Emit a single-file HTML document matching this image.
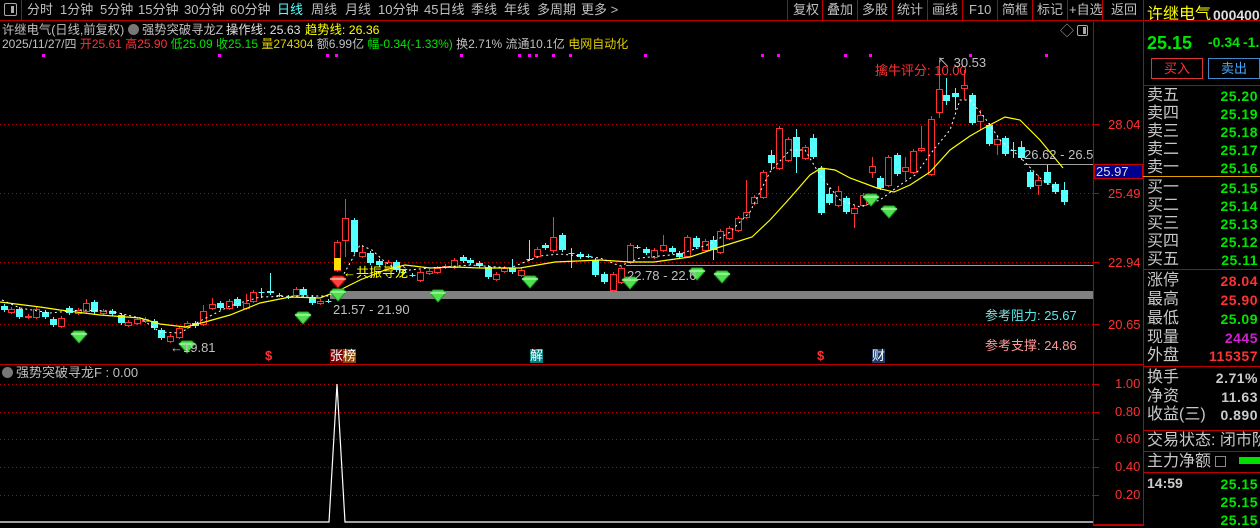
<!DOCTYPE html>
<html><head><meta charset="utf-8"><style>
*{margin:0;padding:0;box-sizing:border-box}
body{width:1260px;height:526px;background:#000;overflow:hidden;position:relative;font-family:"Liberation Sans","Noto Sans CJK SC",sans-serif;color:#c0c0c0}
.t{position:absolute;white-space:nowrap;font-size:13px;line-height:14px}
.r{color:#ff3232}.g{color:#00e600}.y{color:#ffff00}.w{color:#e0e0e0}.cy{color:#54ffff}
.hl{position:absolute;height:1px;background:#c00000}
.vl{position:absolute;width:1px;background:#c00000}
.rt{position:absolute;right:2px;font-size:14px;font-weight:bold;letter-spacing:0.5px;white-space:nowrap}
.lab{position:absolute;left:1147px;font-size:16px;color:#c8c8c8;line-height:17px;white-space:nowrap}
</style></head><body>
<svg id="s" width="1260" height="526" style="position:absolute;left:0;top:0"></svg>

<div style="position:absolute;left:4px;top:3px;width:13px;height:13px;border:1px solid #aaa;border-radius:2px"><div style="position:absolute;right:2px;top:2px;width:3px;height:7px;background:#aaa"></div></div>
<div class="t" style="left:27px;top:3px">分时</div>
<div class="t" style="left:60px;top:3px">1分钟</div>
<div class="t" style="left:100px;top:3px">5分钟</div>
<div class="t" style="left:138px;top:3px">15分钟</div>
<div class="t" style="left:184px;top:3px">30分钟</div>
<div class="t" style="left:230px;top:3px">60分钟</div>
<div class="t cy" style="left:277px;top:3px">日线</div>
<div class="t" style="left:311px;top:3px">周线</div>
<div class="t" style="left:345px;top:3px">月线</div>
<div class="t" style="left:378px;top:3px">10分钟</div>
<div class="t" style="left:424px;top:3px">45日线</div>
<div class="t" style="left:471px;top:3px">季线</div>
<div class="t" style="left:504px;top:3px">年线</div>
<div class="t" style="left:537px;top:3px">多周期</div>
<div class="t" style="left:581px;top:3px">更多 &gt;</div>

<div class="t" style="left:793px;top:3px">复权</div>
<div class="t" style="left:827px;top:3px">叠加</div>
<div class="t" style="left:862px;top:3px">多股</div>
<div class="t" style="left:897px;top:3px">统计</div>
<div class="t" style="left:932px;top:3px">画线</div>
<div class="t" style="left:969px;top:3px">F10</div>
<div class="t" style="left:1002px;top:3px">简框</div>
<div class="t" style="left:1037px;top:3px">标记</div>
<div class="t" style="left:1069px;top:3px">+自选</div>
<div class="t" style="left:1111px;top:3px">返回</div>

<div class="t" style="left:2px;top:23px;font-size:12.3px">许继电气(日线,前复权)</div>
<div style="position:absolute;left:128px;top:24px;width:11px;height:11px;border-radius:50%;background:#777"></div>
<div class="t" style="left:142px;top:23px;font-size:12.3px">强势突破寻龙Z</div>
<div class="t w" style="left:226px;top:23px;font-size:12.3px">操作线: 25.63</div>
<div class="t y" style="left:305px;top:23px;font-size:12.3px">趋势线: 26.36</div>
<div class="t" style="left:2px;top:37px;font-size:12px">2025/11/27/四 <span class="r">开25.61</span> <span class="r">高25.90</span> <span class="g">低25.09</span> <span class="g">收25.15</span> <span style="color:#e0d000">量274304</span> 额6.99亿 <span class="g">幅-0.34(-1.33%)</span> 换2.71% 流通10.1亿 <span style="color:#e0d000">电网自动化</span></div>

<div class="t" style="left:1060px;top:24px;color:#999;font-size:14px">◇</div>
<div style="position:absolute;left:1077px;top:25px;width:11px;height:11px;border:1px solid #aaa;border-radius:2px"><div style="position:absolute;right:1px;top:1px;width:3px;height:7px;background:#aaa"></div></div>

<div class="t r" style="left:875px;top:64px">擒牛评分: 10.00</div>
<div class="t" style="left:937px;top:56px">↖ 30.53</div>
<div class="t" style="left:1024px;top:148px">26.62 - 26.5</div>
<div class="t" style="left:627px;top:269px">22.78 - 22.6</div>
<div class="t" style="left:333px;top:303px">21.57 - 21.90</div>
<div class="t" style="left:170px;top:341px">←19.81</div>
<div class="t y" style="left:343px;top:266px">←共振寻龙</div>
<div class="t" style="left:985px;top:309px;color:#5ee"><span style="color:#8dd">参考</span>阻力: 25.67</div>
<div class="t" style="left:985px;top:339px;color:#f99">参考支撑: 24.86</div>
<div class="t r" style="left:265px;top:349px;font-weight:bold">$</div>
<div class="t" style="left:330px;top:349px;background:#800000;color:#fff">张</div>
<div class="t" style="left:343px;top:349px;background:#8b4500;color:#fff">榜</div>
<div class="t" style="left:530px;top:349px;background:#008080;color:#fff">解</div>
<div class="t r" style="left:817px;top:349px;font-weight:bold">$</div>
<div class="t" style="left:872px;top:349px;background:#1a3a6a;color:#fff">财</div>

<div style="position:absolute;left:2px;top:367px;width:11px;height:11px;border-radius:50%;background:#777"></div>
<div class="t" style="left:16px;top:366px">强势突破寻龙F : 0.00</div>

<div class="t r" style="left:1108px;top:118px">28.04</div>
<div class="t r" style="left:1108px;top:187px">25.49</div>
<div class="t r" style="left:1108px;top:256px">22.94</div>
<div class="t r" style="left:1108px;top:318px">20.65</div>
<div class="t" style="left:1094px;top:164px;width:49px;height:15px;background:#000090;color:#ddd;padding-left:1px;border:1px solid #c00">25.97</div>
<div class="t r" style="left:1115px;top:377px">1.00</div>
<div class="t r" style="left:1115px;top:405px">0.80</div>
<div class="t r" style="left:1115px;top:432px">0.60</div>
<div class="t r" style="left:1115px;top:460px">0.40</div>
<div class="t r" style="left:1115px;top:488px">0.20</div>

<div style="position:absolute;left:1144px;top:0;width:116px;height:526px;overflow:hidden">
<div class="t y" style="left:3px;top:6px;font-size:16px;line-height:18px">许继电气</div>
<div class="t" style="left:69px;top:8px;font-size:14px;font-weight:bold;color:#ddd">000400</div>
<div class="t g" style="left:3px;top:33px;font-size:18px;line-height:20px;font-weight:bold">25.15</div>
<div class="t g" style="left:64px;top:35px;font-size:14px;font-weight:bold">-0.34</div>
<div class="t g" style="left:99px;top:35px;font-size:14px;font-weight:bold">-1.</div>
<div style="position:absolute;left:7px;top:58px;width:52px;height:21px;border:1px solid #d33;color:#f33;font-size:13px;text-align:center;line-height:19px">买入</div>
<div style="position:absolute;left:64px;top:58px;width:52px;height:21px;border:1px solid #48c;color:#4af;font-size:13px;text-align:center;line-height:19px">卖出</div>
<div class="t" style="left:3px;top:432px;font-size:16px;line-height:17px;color:#c8c8c8">交易状态: 闭市阶</div>
</div>

<div class="lab" style="top:87px">卖五</div><div class="rt g" style="top:88px">25.20</div>
<div class="lab" style="top:105px">卖四</div><div class="rt g" style="top:106px">25.19</div>
<div class="lab" style="top:123px">卖三</div><div class="rt g" style="top:124px">25.18</div>
<div class="lab" style="top:141px">卖二</div><div class="rt g" style="top:142px">25.17</div>
<div class="lab" style="top:159px">卖一</div><div class="rt g" style="top:160px">25.16</div>
<div class="lab" style="top:179px">买一</div><div class="rt g" style="top:180px">25.15</div>
<div class="lab" style="top:197px">买二</div><div class="rt g" style="top:198px">25.14</div>
<div class="lab" style="top:215px">买三</div><div class="rt g" style="top:216px">25.13</div>
<div class="lab" style="top:233px">买四</div><div class="rt g" style="top:234px">25.12</div>
<div class="lab" style="top:251px">买五</div><div class="rt g" style="top:252px">25.11</div>
<div class="lab" style="top:272px">涨停</div><div class="rt r" style="top:273px">28.04</div>
<div class="lab" style="top:291px">最高</div><div class="rt r" style="top:292px">25.90</div>
<div class="lab" style="top:310px">最低</div><div class="rt g" style="top:311px">25.09</div>
<div class="lab" style="top:329px">现量</div><div class="rt" style="top:330px;color:#d020d0">2445</div>
<div class="lab" style="top:347px">外盘</div><div class="rt r" style="top:348px">115357</div>
<div class="lab" style="top:369px">换手</div><div class="rt" style="top:370px;color:#ccc">2.71%</div>
<div class="lab" style="top:388px">净资</div><div class="rt" style="top:389px;color:#ccc">11.63</div>
<div class="lab" style="top:406px">收益(三)</div><div class="rt" style="top:407px;color:#ccc">0.890</div>
<div class="lab" style="top:453px">主力净额</div>
<div style="position:absolute;left:1215px;top:456px;width:11px;height:11px;border:1px solid #888"></div>
<div style="position:absolute;left:1239px;top:457px;width:21px;height:7px;background:#00e000"></div>
<div class="t" style="left:1147px;top:476px;font-size:14px;font-weight:bold;color:#ccc">14:59</div>
<div class="rt g" style="top:476px">25.15</div>
<div class="rt g" style="top:494px">25.15</div>
<div class="rt g" style="top:512px">25.15</div>

<div class="hl" style="left:0;top:20px;width:1260px"></div>
<div class="vl" style="left:787px;top:0;height:20px"></div><div class="vl" style="left:822px;top:0;height:20px"></div><div class="vl" style="left:857px;top:0;height:20px"></div><div class="vl" style="left:892px;top:0;height:20px"></div><div class="vl" style="left:927px;top:0;height:20px"></div><div class="vl" style="left:962px;top:0;height:20px"></div><div class="vl" style="left:997px;top:0;height:20px"></div><div class="vl" style="left:1032px;top:0;height:20px"></div><div class="vl" style="left:1067px;top:0;height:20px"></div><div class="vl" style="left:1102px;top:0;height:20px"></div><div class="vl" style="left:21px;top:0;height:20px"></div>
<div class="vl" style="left:1143px;top:0;height:526px"></div>
<div class="vl" style="left:1093px;top:20px;height:506px"></div>
<div class="hl" style="left:0;top:364px;width:1143px"></div>
<div class="hl" style="left:1093px;top:524px;width:50px;height:2px"></div>
<div class="hl" style="left:1143px;top:85px;width:117px"></div>
<div class="hl" style="left:1143px;top:176px;width:117px;background:#e0a000"></div>
<div class="hl" style="left:1143px;top:269px;width:117px"></div>
<div class="hl" style="left:1143px;top:366px;width:117px"></div>
<div class="hl" style="left:1143px;top:430px;width:117px"></div>
<div class="hl" style="left:1143px;top:451px;width:117px"></div>
<div class="hl" style="left:1143px;top:472px;width:117px"></div>

<script>
var s=document.getElementById('s'),h='';
function L(x1,y1,x2,y2,c,ex){h+='<line x1="'+x1+'" y1="'+y1+'" x2="'+x2+'" y2="'+y2+'" stroke="'+c+'" '+(ex||'')+'/>';}
[124,193,262,324].forEach(function(y){L(0,y+.5,1093,y+.5,'#c00000','stroke-dasharray="1,3"');});
[384,412,439,467,495].forEach(function(y){L(0,y+.5,1093,y+.5,'#c00000','stroke-dasharray="1,3"');});
[124,193,262,324].forEach(function(y){L(1093,y+.5,1099,y+.5,'#c00000');});
[384,412,439,467,495].forEach(function(y){L(1093,y+.5,1099,y+.5,'#c00000');});
h+='<rect x="330" y="291" width="763" height="8" fill="#808080"/>';
L(626,265.5,1093,265.5,'#a0a0a0');L(1024,164.5,1093,164.5,'#a0a0a0');
[43,219,327,336,461,519,529,536,553,570,645,762,778,845,870,970,1046].forEach(function(x){h+='<rect x="'+(x-1)+'" y="54" width="3" height="3" fill="#f0f"/>';});
var A=[[10,306,310,'c'],[32,309,312,'r'],[55,309,317,'c'],[80,316,317,'r'],[104,309,317,'r'],[128,312,317,'c'],[152,319,325,'c'],[175,318,326,'r'],[198,308,313,'c'],[222,310,313,'r'],[245,303,311,'r',299],[268,302,312,'c'],[295,311,313,'r'],[320,311,314,'c'],[345,315,323,'c'],[365,322,325,'r'],[390,319,323,'r'],[412,319,321,'r'],[438,321,328,'c'],[460,330,338,'c'],[485,336,341,'r'],[510,328,337,'r'],[533,323,327,'r'],[555,323,326,'c'],[580,311,324,'r',305],[603,304,308,'r',298],[628,303,308,'c'],[652,301,308,'r'],[675,299,306,'c'],[700,303,308,'r',294],[722,292,301,'r'],[745,292,292,'+',288,298],[770,291,293,'c',273],[795,295,295,'+'],[820,297,297,'+'],[843,289,295,'r'],[865,289,295,'c'],[890,297,303,'c'],[912,301,303,'r'],[935,301,301,'+'],[960,242,270,'y'],[985,218,240,'r',199,257],[1008,220,252,'c'],[1033,252,256,'r',245],[1055,253,263,'c'],[1080,261,265,'c'],[1105,262,267,'r'],[1128,262,270,'c'],[1150,272,272,'+'],[1175,275,275,'+'],[1198,272,280,'r'],[1222,271,273,'r'],[1247,268,272,'r'],[1270,266,267,'r'],[1295,260,267,'r'],[1320,257,261,'c'],[1340,260,263,'c'],[1365,263,266,'c'],[1390,267,277,'c'],[1413,274,279,'r'],[1437,268,271,'r'],[1460,268,272,'c',259],[1485,270,275,'r'],[1508,259,259,'+',240],[1530,249,256,'r'],[1555,245,248,'c']];
var B=[[10,237,250,'r',217,253],[35,235,250,'c'],[60,253,257,'+',248,268],[85,254,257,'c'],[110,256,256,'+'],[130,260,275,'c'],[155,274,282,'c'],[180,274,290,'r'],[205,268,282,'r'],[230,245,262,'r'],[250,247,247,'+'],[275,249,253,'c'],[300,250,257,'r'],[325,245,250,'r',235],[350,248,252,'c'],[372,253,257,'c'],[395,237,256,'r'],[420,238,247,'c'],[445,241,250,'r'],[468,240,250,'c',236,260],[490,231,252,'r'],[515,228,238,'r'],[540,218,230,'r'],[565,212,217,'r',180],[588,197,203,'r'],[612,172,197,'r'],[636,155,163,'c',150,170],[660,128,168,'r'],[685,139,160,'r'],[708,137,157,'c',129,173],[733,147,158,'r'],[758,138,157,'c',134],[780,168,213,'c'],[803,194,203,'c',188],[828,191,205,'r',186],[852,198,212,'c'],[876,208,213,'r',205,228],[900,195,205,'r'],[925,166,172,'r',157,178],[950,178,188,'c'],[973,157,185,'r'],[997,155,174,'c'],[1022,167,171,'r',157,180],[1045,151,172,'r'],[1068,148,150,'r',126],[1095,119,174,'r',116],[1118,89,112,'r',60,118],[1140,95,101,'c',78,105],[1165,93,97,'c',88,110],[1190,85,88,'r',70,100],[1213,95,123,'c'],[1238,115,121,'r',110,130],[1262,125,144,'c'],[1285,139,144,'r',135,155],[1310,138,154,'c'],[1333,150,150,'+',142,158],[1356,147,158,'c',141],[1380,172,187,'c'],[1404,180,185,'r',175,195],[1430,172,183,'c',165],[1454,184,192,'c'],[1478,190,202,'c',182,205]];
function C(x,t,b,k,wt,wb){x=Math.round(x)+.5;wt=wt||t-2;wb=wb||b+2;
 var col=(k=='r'||k=='y')?'#ff3232':'#54ffff';
 L(x,wt,x,wb,col);
 if(k=='+'){L(x-3,t+.5,x+3,t+.5,'#54ffff');return;}
 var hh=Math.max(b-t,1);
 if(k=='r')h+='<rect x="'+(x-3)+'" y="'+(t+.5)+'" width="6" height="'+hh+'" fill="#000" stroke="'+col+'"/>';
 else if(k=='y'){h+='<rect x="'+(x-3)+'" y="'+(t+.5)+'" width="6" height="'+hh+'" fill="#000" stroke="#ff3232"/>';h+='<rect x="'+(x-3.5)+'" y="258" width="7" height="12" fill="#ffe000"/>';}
 else h+='<rect x="'+(x-3.5)+'" y="'+t+'" width="7" height="'+hh+'" fill="'+col+'"/>';}
A.forEach(function(c){C(c[0]/2.851,c[1],c[2],c[3],c[4],c[5]);});
B.forEach(function(c){C(550+c[0]/2.877,c[1],c[2],c[3],c[4],c[5]);});
h+='<polyline fill="none" stroke="#ffff00" stroke-width="1.2" points="0,302 40,307 60,310 100,315 140,318 160,324 185,327 205,322 230,315 260,303 290,297 320,298 340,290 360,280 385,270 405,265 430,268 455,267 480,268 520,268 555,262 600,260 630,262 654,262 690,257 720,247 752,237 770,220 790,198 810,175 821,168 835,170 850,178 877,188 894,192 910,185 930,172 950,150 970,136 984,128 1005,117 1020,120 1040,140 1063,168"/>';
h+='<polyline fill="none" stroke="#ffffff" stroke-dasharray="2,3" points="2,300 20,308 50,313 80,310 110,311 140,318 160,332 180,333 200,321 230,306 260,297 300,296 330,296 345,272 360,245 372,250 385,262 400,271 430,268 470,265 510,268 540,256 560,254 600,258 620,266 640,258 680,254 710,244 730,232 750,212 770,172 790,150 805,150 820,175 840,200 860,207 880,200 900,185 915,175 935,148 950,130 960,100 970,100 985,118 1000,140 1020,157 1040,178 1060,192"/>';
h+='<polyline fill="none" stroke="#ffffff" stroke-width="1.2" points="0,522 329,522 337,384 345,522 1093,522"/>';
function G(x,y,c){var f=c?'#ff4040':'#50e050',d=c?'#c00000':'#20a020';h+='<polygon points="'+(x-8)+','+(y-3)+' '+(x-5)+','+(y-6)+' '+(x+5)+','+(y-6)+' '+(x+8)+','+(y-3)+' '+x+','+(y+6)+'" fill="'+f+'" stroke="'+d+'"/><line x1="'+(x-8)+'" y1="'+(y-3)+'" x2="'+(x+8)+'" y2="'+(y-3)+'" stroke="#cfc"/>';}
[[79,337],[303,318],[338,295],[438,296],[530,282],[187,347],[630,283],[697,274],[722,277],[871,200],[889,212]].forEach(function(p){G(p[0],p[1]);});
G(338,282,1);
s.innerHTML=h;
</script>
</body></html>
